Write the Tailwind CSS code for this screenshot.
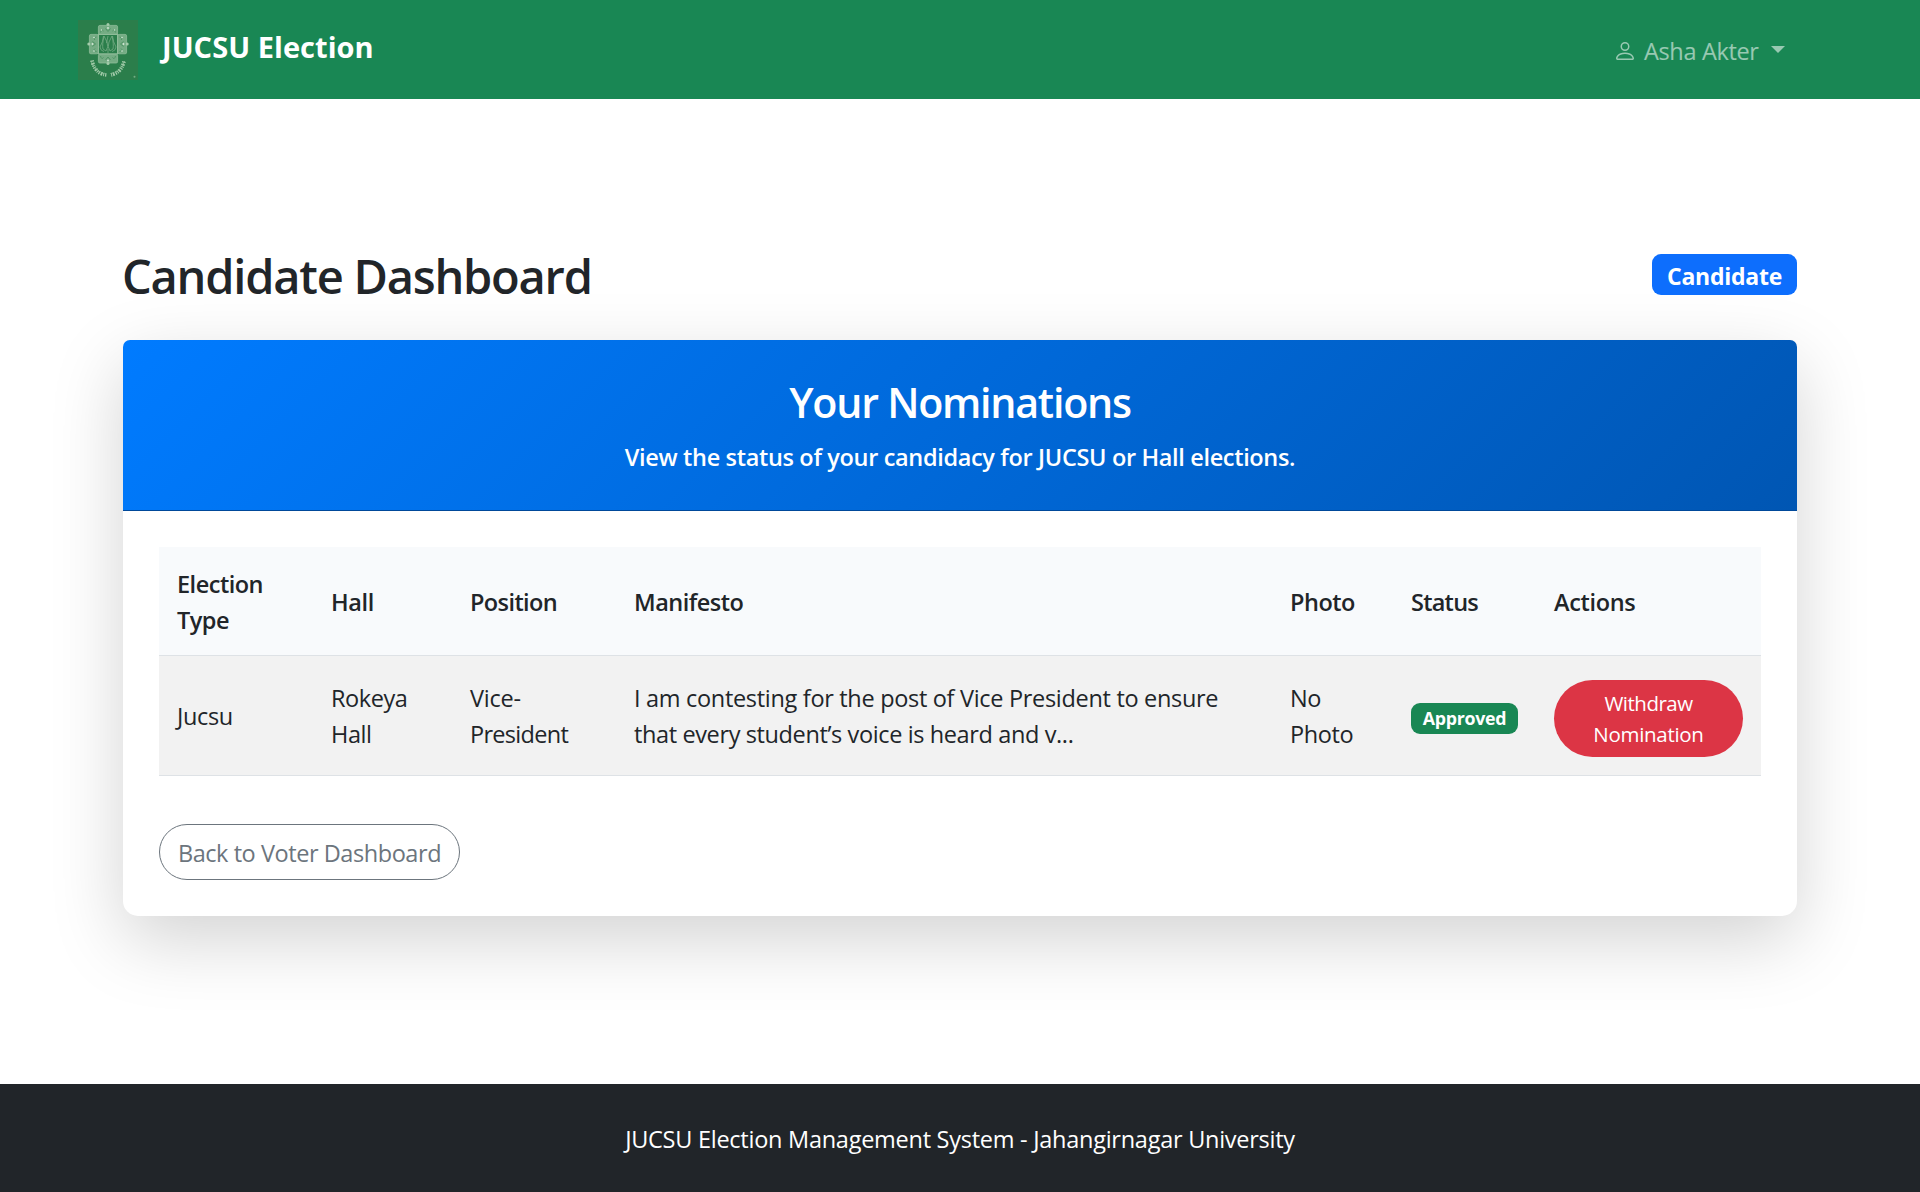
<!DOCTYPE html>
<html lang="en">
<head>
<meta charset="utf-8">
<title>Candidate Dashboard</title>
<script src="https://cdn.jsdelivr.net/npm/@tailwindcss/browser@4"></script>
</head>
<body class="flex min-h-[1192px] flex-col overflow-hidden bg-white font-['Open_Sans',sans-serif] text-[23.5px] leading-[36px] text-[#212529]">
  <nav class="flex h-[99px] items-start justify-between bg-[#198754] pr-[135px] pl-[78px]">
    <a class="flex items-start text-white">
      <svg class="mt-5 size-[60px]" viewBox="0 0 60 60" fill="none">
        <rect width="60" height="60" fill="#2b7e4b"/>
        <g fill="#75ac84" stroke="#8fbd99" stroke-width=".8">
          <rect x="20.4" y="5.4" width="19.2" height="9" rx="1.5"/>
          <rect x="20.4" y="34" width="19.2" height="9" rx="1.5"/>
          <rect x="11.4" y="14.4" width="9" height="19.4" rx="1.5"/>
          <rect x="39.6" y="14.4" width="9" height="19.4" rx="1.5"/>
        </g>
        <g fill="#a4cbaa">
          <circle cx="30" cy="4.6" r="1.5"/><circle cx="30" cy="43.6" r="1.5"/>
          <circle cx="10.8" cy="24" r="1.5"/><circle cx="49.2" cy="24" r="1.5"/>
        </g>
        <g stroke="#4a9160" stroke-width=".9">
          <path d="M22.5 12.5q1-4 3-1.5M37.5 12.5q-1-4-3-1.5M27.5 8.5l2.500 3 2.500-3M22.500 36q1 4 3 1.500M37.500 36q-1 4-3 1.500M27.500 40l2.500-3 2.500 3"/>
          <path d="M18.500 17q-4 1-1.500 3M18.500 31.500q-4-1-1.500-3M14.500 21.500l3 2.500-3 2.500M41.500 17q4 1 1.500 3M41.500 31.500q4-1 1.500-3M45.500 21.500l-3 2.500 3 2.500"/>
        </g>
        <g fill="#d5e9d8">
          <circle cx="30" cy="8" r=".9"/><circle cx="30" cy="40.5" r=".9"/><circle cx="14.5" cy="24" r=".9"/><circle cx="45.5" cy="24" r=".9"/>
          <circle cx="23.5" cy="10" r=".7"/><circle cx="36.5" cy="10" r=".7"/><circle cx="16" cy="17.5" r=".8"/><circle cx="44" cy="17.5" r=".8"/><circle cx="16" cy="31" r=".8"/><circle cx="44" cy="31" r=".8"/>
        </g>
        <rect x="20.5" y="14.5" width="19" height="19.3" fill="#2b7e4b" stroke="#8fbd99" stroke-width="1"/>
        <path d="M25.500 16q-.5 6-3.500 11 .5 4 4 4.500M26 16q-2 9-1 13l3 2q3-4 1-9zM30 16l-1.500 7M34 16q2 9 1 13l-3 2q-3-4-1-9zM34.500 16q.5 6 3.500 11-.5 4-4 4.500M30 29v5" stroke="#75ac84" stroke-width=".8"/>
        <path d="M14 40.500q3 13.500 15 14.500M46 41.500q-3 12-13.500 13.500" stroke="#a4cbaa" stroke-width="3.600" stroke-dasharray="1.200 1.100 1.800 .9 .9 1"/>
        <path d="M13 40.500q3 11.500 15 13.500M46.500 41q-3 10.500-14 12.500" stroke="#8fbd99" stroke-width=".9" stroke-dasharray="4 .8 2.500 .7"/>
        <circle cx="56.500" cy="56.700" r="1" fill="#75ac84"/>
      </svg>
      <span class="mt-6 ml-[24px] text-[29px] leading-[45px] font-bold tracking-[0.05px]">JUCSU Election</span>
    </a>
    <a class="mt-[33px] flex items-start text-white/55">
      <svg class="mt-1.5 size-6" viewBox="0 0 16 16" fill="currentColor"><path d="M8 8a3 3 0 1 0 0-6 3 3 0 0 0 0 6m2-3a2 2 0 1 1-4 0 2 2 0 0 1 4 0m4 8c0 1-1 1-1 1H3s-1 0-1-1 1-4 6-4 6 3 6 4m-1-.004c-.001-.246-.154-.986-.832-1.664C11.516 10.680 10.289 10 8 10s-3.516.680-4.168 1.332c-.678.678-.830 1.418-.832 1.664z"/></svg>
      <span class="ml-[7px] w-[127px] tracking-[-0.35px]">Asha Akter</span>
      <svg class="mt-[13px] h-[7px] w-[14px]" viewBox="0 0 14 7" fill="currentColor"><path d="M0 0h14L7 7z"/></svg>
    </a>
  </nav>

  <main class="mx-[123px] mt-[148px]">
    <div class="flex h-[93px] items-start justify-between">
      <h1 class="-ml-px text-[47px] leading-[58px] font-semibold tracking-[-1.22px]">Candidate Dashboard</h1>
      <span class="mt-[7px] flex h-[41px] w-[145px] justify-center rounded-[9px] bg-[#0d6efd] text-[23px] leading-[44px] font-bold tracking-[-0.25px] text-white">Candidate</span>
    </div>

    <section class="h-[576px] rounded-[15px] bg-white shadow-[0_24px_72px_rgba(0,0,0,0.175)]">
      <header class="h-[171px] rounded-t-[7px] border-b border-[#00499a] bg-[linear-gradient(135deg,#007bff,#0056b3)] pt-[37px] text-center font-semibold text-white">
        <h2 class="text-[41.2px] leading-[50px] tracking-[-1.25px]">Your Nominations</h2>
        <p class="mt-[12px] tracking-[-0.34px]">View the status of your candidacy for JUCSU or Hall elections.</p>
      </header>
      <div class="px-9 pt-9">
        <table class="w-[1602px] table-fixed border-separate border-spacing-0 text-left">
          <colgroup><col class="w-[154px]"><col class="w-[139px]"><col class="w-[164px]"><col class="w-[656px]"><col class="w-[121px]"><col class="w-[143px]"><col class="w-[225px]"></colgroup>
          <thead class="bg-[#f8fafc]">
            <tr class="h-[109px] *:border-b *:border-[#dee2e6] *:px-[18px] *:pt-px *:font-semibold">
              <th class="tracking-[-0.5px]">Election Type</th>
              <th class="tracking-[-0.4px]">Hall</th>
              <th class="tracking-[-0.6px]">Position</th>
              <th class="tracking-[-0.5px]">Manifesto</th>
              <th class="tracking-[-0.5px]">Photo</th>
              <th class="tracking-[-0.75px]">Status</th>
              <th class="tracking-[-0.35px]">Actions</th>
            </tr>
          </thead>
          <tbody class="bg-[#f2f2f2]">
            <tr class="h-[120px] *:border-b *:border-[#dee2e6] *:px-[18px]">
              <td class="tracking-[-0.35px]">Jucsu</td>
              <td class="tracking-[-0.45px]">Rokeya<br>Hall</td>
              <td><span class="tracking-[-0.2px]">Vice-</span><br><span class="tracking-[-0.7px]">President</span></td>
              <td><span class="tracking-[-0.31px]">I am contesting for the post of Vice President to ensure</span><br><span class="tracking-[-0.38px]">that every student’s voice is heard and v...</span></td>
              <td class="tracking-[-0.4px]">No<br>Photo</td>
              <td><span class="mt-[5px] flex h-[31px] w-[107px] justify-center rounded-[9px] bg-[#198754] text-[17.8px] leading-[31px] font-bold tracking-[-0.25px] text-white">Approved</span></td>
              <td><button class="mt-[5px] block h-[77px] w-[189px] rounded-full bg-[#dc3545] pt-px text-[20.5px] leading-[31px] text-white"><span class="tracking-[-0.5px]">Withdraw</span><br><span class="tracking-[-0.3px]">Nomination</span></button></td>
            </tr>
          </tbody>
        </table>
        <a class="mt-12 flex h-[56px] w-[301px] justify-center rounded-full border border-[#6c757d] pt-[10px] tracking-[-0.44px] text-[#6c757d]">Back to Voter Dashboard</a>
      </div>
    </section>
  </main>

  <footer class="mt-auto h-[108px] bg-[#212529] pt-[37px] text-center tracking-[-0.26px] text-white">JUCSU Election Management System - Jahangirnagar University</footer>
</body>
</html>
